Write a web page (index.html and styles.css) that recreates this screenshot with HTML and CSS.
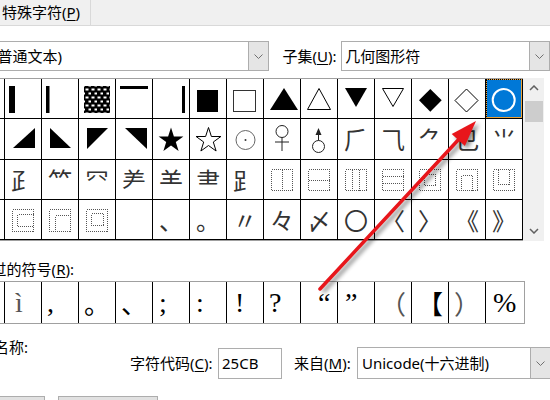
FILE: index.html
```html
<!DOCTYPE html>
<html>
<head>
    <title>符号</title>
    <link rel="stylesheet" href="styles.css">
</head>
<body>
    <div class="tabs">
        <div class="tab">特殊字符(<u>P</u>)</div>
    </div>

    <div class="font-row">
        <div class="combo font-combo">
            <span class="combo-text">(普通文本)</span>
            <span class="combo-btn"><svg width="9" height="5"><polyline points="0.5,0.5 4.5,4.5 8.5,0.5" fill="none" stroke="#707070"/></svg></span>
        </div>
        <label class="subset-lbl">子集(<u>U</u>):</label>
        <div class="combo subset-combo">
            <span class="combo-text">几何图形符</span>
            <span class="combo-btn"><svg width="9" height="5"><polyline points="0.5,0.5 4.5,4.5 8.5,0.5" fill="none" stroke="#707070"/></svg></span>
        </div>
    </div>

    <div class="chart">
        <div class="grid">
            <!-- row 1 -->
            <div class="cell"></div>
            <div class="cell"><svg viewBox="0 0 36 39" width="36" height="39"><rect x="4" y="7" width="6" height="27"/></svg></div>
            <div class="cell"><svg viewBox="0 0 36 39" width="36" height="39"><rect x="4" y="7" width="3.5" height="27"/></svg></div>
            <div class="cell"><svg viewBox="0 0 36 39" width="36" height="39"><defs><pattern id="bricks" width="6" height="8" patternUnits="userSpaceOnUse"><rect width="6" height="8" fill="#000"/><rect x="0.5" y="1.5" width="3" height="2" fill="#fff"/><rect x="3.5" y="5.5" width="3" height="2" fill="#fff"/></pattern></defs><rect x="5" y="7" width="26" height="27" fill="url(#bricks)"/></svg></div>
            <div class="cell"><svg viewBox="0 0 36 39" width="36" height="39"><rect x="4" y="7" width="28" height="3"/></svg></div>
            <div class="cell"><svg viewBox="0 0 36 39" width="36" height="39"><rect x="29" y="7" width="3" height="27"/></svg></div>
            <div class="cell"><svg viewBox="0 0 36 39" width="36" height="39"><rect x="7" y="11" width="21" height="22"/></svg></div>
            <div class="cell"><svg viewBox="0 0 36 39" width="36" height="39"><rect x="6.5" y="11.5" width="22" height="21" fill="none" stroke="#333"/></svg></div>
            <div class="cell"><svg viewBox="0 0 36 39" width="36" height="39"><polygon points="20,9 34,31 6,31"/></svg></div>
            <div class="cell"><svg viewBox="0 0 36 39" width="36" height="39"><polygon points="18,9.5 29.5,30.5 6.5,30.5" fill="none" stroke="#000"/></svg></div>
            <div class="cell"><svg viewBox="0 0 36 39" width="36" height="39"><polygon points="7,9 29,9 18,28"/></svg></div>
            <div class="cell"><svg viewBox="0 0 36 39" width="36" height="39"><polygon points="7.5,9.5 28.5,9.5 18,27.5" fill="none" stroke="#000"/></svg></div>
            <div class="cell"><svg viewBox="0 0 36 39" width="36" height="39"><polygon points="18.3,10 29.7,21.3 18.3,32.7 7,21.3"/></svg></div>
            <div class="cell"><svg viewBox="0 0 36 39" width="36" height="39"><polygon points="17.5,10 29,21.5 17.5,33 6,21.5" fill="none" stroke="#000"/></svg></div>
            <div class="cell selected"><svg viewBox="0 0 36 39" width="36" height="39"><circle cx="17.7" cy="21" r="11" fill="none" stroke="#fff" stroke-width="2"/></svg></div>

            <!-- row 2 -->
            <div class="cell"></div>
            <div class="cell"><svg viewBox="0 0 36 40" width="36" height="40"><polygon points="30,9 30,29 8,29"/></svg></div>
            <div class="cell"><svg viewBox="0 0 36 40" width="36" height="40"><polygon points="8,9 8,29 29,29"/></svg></div>
            <div class="cell"><svg viewBox="0 0 36 40" width="36" height="40"><polygon points="8,9 29,9 8,30"/></svg></div>
            <div class="cell"><svg viewBox="0 0 36 40" width="36" height="40"><polygon points="9,9 31,9 31,30"/></svg></div>
            <div class="cell"><svg viewBox="0 0 36 40" width="36" height="40"><polygon points="18,8.5 20.9,17.5 30.4,17.5 22.8,23 25.6,32 18,26.5 10.4,32 13.2,23 5.6,17.5 15.1,17.5"/></svg></div>
            <div class="cell"><svg viewBox="0 0 36 40" width="36" height="40"><polygon points="18.5,8.5 21.4,17.5 30.9,17.5 23.3,23 26.1,32 18.5,26.5 10.9,32 13.7,23 6.1,17.5 15.6,17.5" fill="none" stroke="#000"/></svg></div>
            <div class="cell"><svg viewBox="0 0 36 40" width="36" height="40"><circle cx="18.5" cy="21" r="9.5" fill="none" stroke="#666"/><circle cx="18.5" cy="21" r="1" fill="#333"/></svg></div>
            <div class="cell"><svg viewBox="0 0 36 40" width="36" height="40"><circle cx="18" cy="12.5" r="6" fill="none" stroke="#222"/><line x1="18" y1="18.5" x2="18" y2="32" stroke="#222"/><line x1="11" y1="23" x2="25" y2="23" stroke="#222"/></svg></div>
            <div class="cell"><svg viewBox="0 0 36 40" width="36" height="40"><circle cx="17.5" cy="27.5" r="6" fill="none" stroke="#222"/><line x1="17.5" y1="21.5" x2="17.5" y2="14" stroke="#222"/><polygon points="14.5,16 20.5,16 17.5,9" fill="#222"/></svg></div>
            <div class="cell">⺁</div>
            <div class="cell">⺄</div>
            <div class="cell">⺈</div>
            <div class="cell">⺋</div>
            <div class="cell">⺌</div>

            <!-- row 3 -->
            <div class="cell"></div>
            <div class="cell">⺪</div>
            <div class="cell">⺮</div>
            <div class="cell">⺳</div>
            <div class="cell">⺶</div>
            <div class="cell">⺷</div>
            <div class="cell">⺻</div>
            <div class="cell">⻊</div>
            <div class="cell"><svg class="idc" viewBox="0 0 36 39" width="36" height="39"><rect x="7.5" y="9.5" width="21" height="21"/><path d="M18 9.5V30.5"/></svg></div>
            <div class="cell"><svg class="idc" viewBox="0 0 36 39" width="36" height="39"><rect x="7.5" y="9.5" width="21" height="21"/><path d="M7.5 20H28.5"/></svg></div>
            <div class="cell"><svg class="idc" viewBox="0 0 36 39" width="36" height="39"><rect x="7.5" y="9.5" width="21" height="21"/><path d="M14.5 9.5V30.5M21.5 9.5V30.5"/></svg></div>
            <div class="cell"><svg class="idc" viewBox="0 0 36 39" width="36" height="39"><rect x="7.5" y="9.5" width="21" height="21"/><path d="M7.5 16.5H28.5M7.5 23.5H28.5"/></svg></div>
            <div class="cell"><svg class="idc" viewBox="0 0 36 39" width="36" height="39"><rect x="7.5" y="9.5" width="21" height="21"/><rect x="12.5" y="14.5" width="11" height="11"/></svg></div>
            <div class="cell"><svg class="idc" viewBox="0 0 36 39" width="36" height="39"><rect x="7.5" y="9.5" width="21" height="21"/><path d="M12.5 30.5V15.5H23.5V30.5"/></svg></div>
            <div class="cell"><svg class="idc" viewBox="0 0 36 39" width="36" height="39"><rect x="7.5" y="9.5" width="21" height="21"/><path d="M12.5 9.5V24.5H23.5V9.5"/></svg></div>

            <!-- row 4 -->
            <div class="cell"></div>
            <div class="cell"><svg class="idc" viewBox="0 0 36 39" width="36" height="39"><rect x="7.5" y="9.5" width="21" height="22"/><path d="M28.5 14.5H12.5V26.5H28.5"/></svg></div>
            <div class="cell"><svg class="idc" viewBox="0 0 36 39" width="36" height="39"><rect x="7.5" y="9.5" width="21" height="22"/><path d="M28.5 15.5H13.5V31.5"/></svg></div>
            <div class="cell"><svg class="idc" viewBox="0 0 36 39" width="36" height="39"><rect x="7.5" y="9.5" width="21" height="22"/><rect x="12.5" y="13.5" width="12" height="12"/></svg></div>
            <div class="cell"></div>
            <div class="cell">、</div>
            <div class="cell">。</div>
            <div class="cell">〃</div>
            <div class="cell">々</div>
            <div class="cell">〆</div>
            <div class="cell">〇</div>
            <div class="cell">〈</div>
            <div class="cell">〉</div>
            <div class="cell">《</div>
            <div class="cell">》</div>
        </div>
        <div class="scrollbar">
            <div class="sb-arrow"><svg width="10" height="6"><polyline points="1,5 5,1 9,5" fill="none" stroke="#606060" stroke-width="1.5"/></svg></div>
            <div class="sb-thumb"></div>
            <div class="sb-arrow sb-down"><svg width="10" height="6"><polyline points="1,1 5,5 9,1" fill="none" stroke="#606060" stroke-width="1.5"/></svg></div>
        </div>
    </div>

    <div class="recent-lbl"><span>近期使用过的符号(<u>R</u>):</span></div>
    <div class="recent">
        <div class="rcell"></div>
        <div class="rcell thin" style="padding-left:10px">ì</div>
        <div class="rcell" style="padding-left:5px">,</div>
        <div class="rcell cjk">。</div>
        <div class="rcell cjk">、</div>
        <div class="rcell" style="padding-left:6px">;</div>
        <div class="rcell" style="padding-left:6px">:</div>
        <div class="rcell" style="padding-left:8px">!</div>
        <div class="rcell" style="padding-left:5px">?</div>
        <div class="rcell" style="padding-left:17px">“</div>
        <div class="rcell" style="padding-left:7px">”</div>
        <div class="rcell cjk thin">（</div>
        <div class="rcell cjk">【</div>
        <div class="rcell cjk thin">）</div>
        <div class="rcell" style="padding-left:7px">%</div>
    </div>

    <div class="info-row">
        <div class="name-lbl"><span>Unicode 名称:</span></div>
        <div class="code-group">
            <label class="code-lbl">字符代码(<u>C</u>):</label>
            <div class="code-input">25CB</div>
            <label class="from-lbl">来自(<u>M</u>):</label>
            <div class="combo from-combo">
                <span class="combo-text">Unicode(十六进制)</span>
                <span class="combo-btn"><svg width="9" height="5"><polyline points="0.5,0.5 4.5,4.5 8.5,0.5" fill="none" stroke="#707070"/></svg></span>
            </div>
        </div>
    </div>

    <div class="buttons">
        <div class="btn btn-first"></div>
        <div class="btn btn-second"></div>
    </div>

    <svg class="arrow" width="550" height="400">
        <defs>
            <filter id="blur" x="-20%" y="-20%" width="140%" height="140%"><feGaussianBlur stdDeviation="2"/></filter>
        </defs>
        <g transform="translate(3,3)" filter="url(#blur)" opacity="0.45">
            <line x1="320" y1="289" x2="460" y2="138" stroke="#000" stroke-width="3.5"/>
            <polygon points="476,121 464.9,146.1 451.7,133.9" fill="#000"/>
        </g>
        <line x1="320" y1="289" x2="460" y2="138" stroke="#e8161b" stroke-width="3.5" stroke-linecap="round"/>
        <polygon points="476,121 464.9,146.1 451.7,133.9" fill="#e8161b"/>
    </svg>
</body>
</html>
```

FILE: styles.css
```css
* {
    box-sizing: border-box;
}
body {
    margin: 0;
    width: 550px;
    height: 400px;
    overflow: hidden;
    position: relative;
    background: #fff;
    color: #000;
    font-family: "Noto Sans", "Noto Sans CJK SC", sans-serif;
    font-size: 15px;
    line-height: 20px;
}
u {
    text-underline-offset: 2px;
}
.tabs {
    display: flex;
    height: 26px;
    background: #f0f0f0;
    border-bottom: 1px solid #d9d9d9;
}
.tab {
    width: 91px;
    padding-left: 2px;
    line-height: 24px;
    border-right: 1px solid #d9d9d9;
    white-space: nowrap;
}
.font-row {
    display: flex;
    align-items: center;
    height: 30px;
    margin-top: 15px;
}
.combo {
    display: flex;
    height: 30px;
    background: #fff;
    border: 1px solid #adadad;
}
.combo-text {
    flex: 1;
    display: flex;
    align-items: center;
    white-space: nowrap;
    overflow: hidden;
}
.combo-btn {
    width: 20px;
    display: flex;
    align-items: center;
    justify-content: center;
    background: #e5e5e5;
    border-left: 1px solid #adadad;
}
.font-combo {
    width: 310px;
    margin-left: -40px;
}
.font-combo .combo-text {
    padding-left: 32px;
}
.subset-lbl {
    width: 59px;
    margin-left: 13px;
    white-space: nowrap;
}
.subset-combo {
    width: 209px;
}
.subset-combo .combo-text {
    padding-left: 3px;
}
.chart {
    display: flex;
    margin-top: 7px;
}
.grid {
    display: grid;
    grid-template-columns: repeat(15, 37px);
    grid-template-rows: 40px 41px 40px 40px;
    margin-left: -32px;
    border-top: 1px solid #a0a0a0;
    border-bottom: 1px solid #a0a0a0;
}
.cell {
    display: flex;
    align-items: center;
    justify-content: center;
    border-right: 1px solid #000;
    border-bottom: 1px solid #000;
    font-family: "Noto Sans CJK SC", sans-serif;
    font-size: 24px;
    line-height: 1;
    color: #333;
}
.cell svg {
    display: block;
    fill: #000;
}
.cell svg.idc {
    fill: none;
    stroke: #555;
    stroke-width: 1;
    stroke-dasharray: 1 1;
    shape-rendering: crispEdges;
}
.cell.selected {
    background: #0078d7;
    box-shadow: inset 0 0 0 1px #e9a23b;
    outline: 1px dotted #000;
    outline-offset: -1px;
}
.scrollbar {
    width: 21px;
    height: 163px;
    display: flex;
    flex-direction: column;
    align-items: center;
    background: #f0f0f0;
}
.sb-arrow {
    height: 20px;
    width: 100%;
    display: flex;
    align-items: center;
    justify-content: center;
}
.sb-thumb {
    width: 18px;
    height: 21px;
    margin-top: 3px;
    background: #cdcdcd;
}
.sb-down {
    margin-top: auto;
}
.recent-lbl {
    width: 74px;
    display: flex;
    justify-content: flex-end;
    white-space: nowrap;
    margin-top: 18px;
}
.recent {
    display: grid;
    grid-template-columns: repeat(14, 37px) 38px;
    width: 557px;
    height: 43px;
    margin-top: 2px;
    margin-left: -32px;
    border-top: 1px solid #a0a0a0;
    border-bottom: 1px solid #a0a0a0;
    border-right: 1px solid #a0a0a0;
}
.rcell {
    display: flex;
    align-items: center;
    justify-content: flex-start;
    padding-left: 5px;
    border-right: 1px solid #000;
    font-family: "Liberation Serif", serif;
    font-size: 28px;
    line-height: 41px;
    white-space: nowrap;
}
.rcell:last-child {
    border-right: none;
}
.rcell.cjk {
    font-family: "Noto Sans CJK SC", sans-serif;
    font-size: 26px;
}
.rcell.thin {
    color: #555;
}
.info-row {
    display: flex;
    align-items: flex-start;
}
.name-lbl {
    width: 28px;
    display: flex;
    justify-content: flex-end;
    white-space: nowrap;
    margin-top: 13px;
}
.code-group {
    display: flex;
    align-items: center;
    height: 32px;
    margin-top: 23px;
    margin-left: 102px;
}
.code-lbl {
    width: 88px;
    white-space: nowrap;
}
.code-input {
    width: 64px;
    height: 31px;
    display: flex;
    align-items: center;
    padding-left: 3px;
    border: 1px solid #adadad;
}
.from-lbl {
    width: 63px;
    margin-left: 12px;
    white-space: nowrap;
}
.from-combo {
    width: 194px;
    height: 32px;
}
.from-combo .combo-text {
    padding-left: 4px;
}
.buttons {
    display: flex;
    margin-top: 17px;
}
.btn {
    height: 30px;
    background: #e1e1e1;
    border: 1px solid #adadad;
}
.btn-first {
    width: 85px;
    margin-left: -40px;
}
.btn-second {
    width: 100px;
    margin-left: 13px;
}
.arrow {
    position: absolute;
    left: 0;
    top: 0;
    pointer-events: none;
}
```
